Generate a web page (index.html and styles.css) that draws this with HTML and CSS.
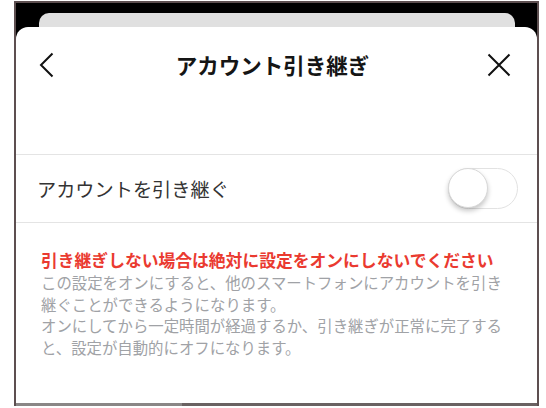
FILE: index.html
```html
<!DOCTYPE html>
<html lang="ja">
<head>
<meta charset="utf-8">
<link rel="stylesheet" href="styles.css">
</head>
<body>
<div class="device">
  <div class="back-card"></div>
  <div class="sheet">
    <div class="header">
      <svg class="icon-back" width="16" height="26" viewBox="0 0 16 26"><path d="M14.5 1.5 L3 13 L14.5 24.5" fill="none" stroke="#111" stroke-width="2" stroke-linejoin="miter"/></svg>
      <div class="title">アカウント引き継ぎ</div>
      <svg class="icon-close" width="24" height="24" viewBox="0 0 24 24"><path d="M1.5 1.5 L22.5 22.5 M22.5 1.5 L1.5 22.5" fill="none" stroke="#111" stroke-width="2"/></svg>
    </div>
    <div class="row">
      <div class="row-label">アカウントを引き継ぐ</div>
      <div class="toggle"><div class="knob"></div></div>
    </div>
    <div class="notes">
      <p class="warn">引き継ぎしない場合は絶対に設定をオンにしないでください</p>
      <p class="desc">この設定をオンにすると、他のスマートフォンにアカウントを引き継ぐことができるようになります。</p>
      <p class="desc">オンにしてから一定時間が経過するか、引き継ぎが正常に完了すると、設定が自動的にオフになります。</p>
    </div>
  </div>
  <div class="bottom-edge"></div>
</div>
</body>
</html>
```

FILE: styles.css
```css
html, body {
  margin: 0;
  padding: 0;
  background: #ffffff;
}
body {
  font-family: "Noto Sans CJK JP", "Noto Sans", sans-serif;
}
.device {
  margin: 1px 0 0 14px;
  width: 525px;
  height: 405px;
  box-sizing: border-box;
  border: 2px solid #5d4f50;
  border-bottom: 0;
  background: #000;
  overflow: hidden;
  display: flex;
  flex-direction: column;
}
.back-card {
  margin: 10px 22px 0 23px;
  height: 30px;
  flex: none;
  background: #e0e0e0;
  border-radius: 10px 10px 0 0;
}
.sheet {
  margin-top: -16px;
  flex: 1;
  background: #fff;
  border-radius: 12px 12px 0 0;
  display: flex;
  flex-direction: column;
}
.bottom-edge {
  height: 3px;
  flex: none;
  background: linear-gradient(to right, #8a8686 0, #8a8686 166px, #6a6262 166px, #6a6262 100%);
}
.header {
  height: 72px;
  flex: none;
  display: flex;
  align-items: center;
  justify-content: space-between;
  padding: 0 26px 0 22px;
  margin-bottom: 55px;
}
.icon-back { margin-top: 3px; }
.icon-close { margin-top: 3px; }
.title {
  font-size: 21.5px;
  font-weight: 700;
  color: #151515;
  margin-left: 4px;
  margin-top: 2px;
}
.row {
  height: 67px;
  flex: none;
  border-top: 1px solid #e4e4e4;
  border-bottom: 1px solid #e4e4e4;
  display: flex;
  align-items: center;
  justify-content: space-between;
  padding: 0 19px 0 21px;
}
.row-label {
  font-size: 19.2px;
  color: #333;
}
.toggle {
  width: 70px;
  height: 41px;
  box-sizing: border-box;
  border: 1px solid #e2e2e2;
  border-radius: 21px;
  background: #fff;
  position: relative;
}
.knob {
  position: absolute;
  left: -1px;
  top: -1px;
  width: 40px;
  height: 40px;
  box-sizing: border-box;
  border-radius: 50%;
  border: 1px solid #d8d8d8;
  background: #fff;
  box-shadow: 0 3px 5px rgba(0,0,0,0.22);
}
.notes {
  padding: 25px 0 0 25px;
  width: 472px;
}
.notes p { margin: 0; }
.warn {
  font-size: 16.8px;
  font-weight: 700;
  color: #ea3a30;
  line-height: 24px;
}
.desc {
  font-size: 15.4px;
  color: #a0a2a6;
  line-height: 21.7px;
}
```
